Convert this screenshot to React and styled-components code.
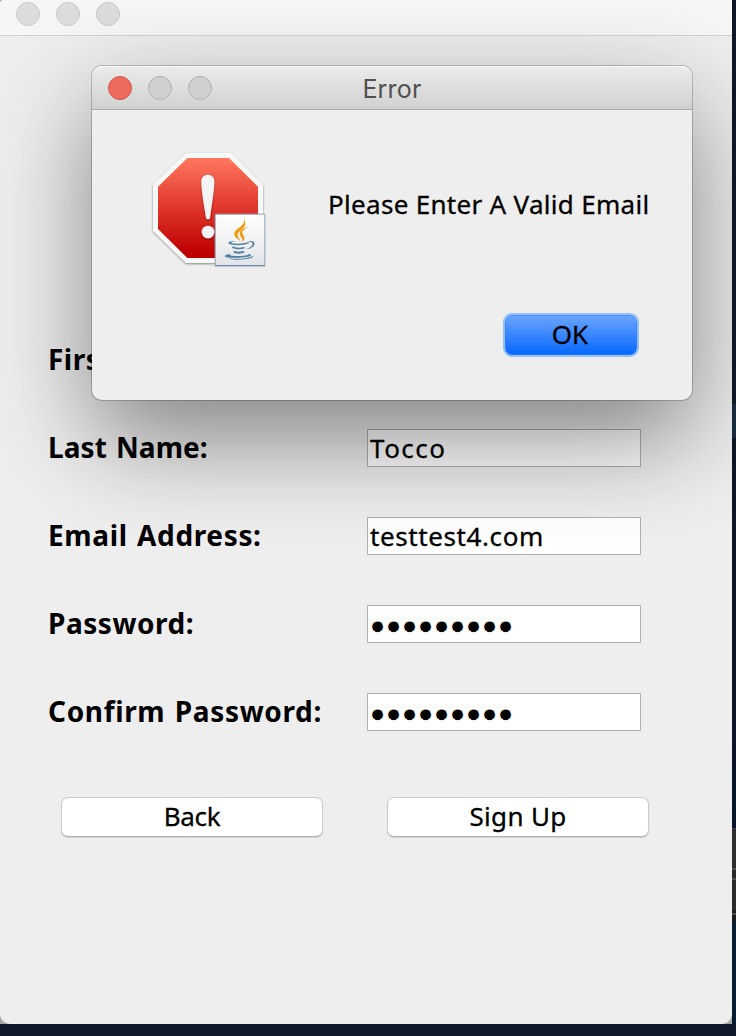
import React from "react";
import styled, { createGlobalStyle } from "styled-components";

const GlobalStyle = createGlobalStyle`
  *, *::before, *::after { box-sizing: border-box; }
  body {
    margin: 0;
    background: #0f1b2a;
    font-family: "Noto Sans", "Open Sans", sans-serif;
    color: #000;
  }
`;

const Desktop = styled.main`
  display: grid;
  grid-template: 1024px 12px / 732px 4px;
  width: 736px;
  height: 1036px;
  overflow: hidden;
`;

const DesktopEdge = styled.div`
  background: linear-gradient(
    to bottom,
    #0f1725 0 404px,
    #1a2a3e 404px 438px,
    #0e1625 438px 700px,
    #08152a 828px,
    #4a4a4c 828px 829px,
    #2e2e30 829px 868px,
    #505052 868px 870px,
    #29292b 870px 878px,
    #505052 878px 880px,
    #2b2b2d 880px 911px,
    #1c1c1e 911px 913px,
    #505052 913px 915px,
    #1d1d1f 915px 921px,
    #0a1a30 922px
  );
`;

const WindowCorner = styled.div`
  background: #a6a6a6;
`;

const Window = styled.section`
  position: relative;
  height: 1024px;
  border-radius: 4px 0 10px 10px;
  background: #eee;
  overflow: hidden;
`;

const WindowBar = styled.header`
  display: flex;
  height: 36px;
  padding: 2px 16px 0;
  background: #f6f6f6;
  border-bottom: 1px solid #d1d1d1;
`;

const Lights = styled.div`
  display: flex;
  gap: 16px;
`;

const Light = styled.span`
  width: 24px;
  height: 24px;
  border-radius: 50%;
  border: 1px solid ${(p) => p.$edge};
  background: ${(p) => p.$fill};
`;

const Form = styled.div`
  display: flex;
  flex-direction: column;
  gap: 50px;
  padding: 305px 91px 0 48px;
`;

const FieldRow = styled.div`
  display: flex;
  align-items: center;
  justify-content: space-between;
  height: 38px;
`;

const Label = styled.label`
  padding-bottom: 1px;
  font-size: 28px;
  line-height: 37px;
  font-weight: 700;
  white-space: nowrap;
  letter-spacing: ${(p) => p.$track}px;
  word-spacing: 1.5px;
`;

const Field = styled.div`
  display: flex;
  align-items: center;
  width: 274px;
  height: 38px;
  padding: 0 2px;
  border: 1px solid #b0b0b0;
  background: #fff;
  font-size: ${(p) => (p.$secret ? 25 : 26)}px;
  line-height: 36px;
  letter-spacing: ${(p) => p.$track}px;
  white-space: nowrap;
  -webkit-text-stroke: ${(p) => (p.$secret ? 0 : 0.3)}px #000;
`;

const Actions = styled.div`
  display: flex;
  gap: 64px;
  padding: 16px 0 0 13px;
`;

const Button = styled.button`
  width: 262px;
  height: 40px;
  flex: none;
  padding: 0 0 2px;
  border: 1px solid #cbcbcb;
  border-bottom-color: #b0b0b0;
  border-radius: 7px;
  background: #fff;
  box-shadow: 0 1px 1px rgba(0, 0, 0, 0.12);
  color: #000;
  font: 400 26px/36px "Noto Sans", sans-serif;
  letter-spacing: ${(p) => p.$track || 0}px;
  -webkit-text-stroke: 0.3px #000;
`;

const Dialog = styled.section`
  position: absolute;
  left: 92px;
  top: 66px;
  width: 600px;
  height: 334px;
  border-radius: 10px;
  background: #eee;
  box-shadow: 0 0 0 1px rgba(0, 0, 0, 0.2), 0 39px 100px rgba(0, 0, 0, 0.45);
`;

const DialogBar = styled.header`
  display: grid;
  grid-template-columns: 1fr auto 1fr;
  height: 44px;
  padding: 10px 16px 0;
  border-radius: 10px 10px 0 0;
  border-bottom: 1px solid #adadad;
  background: linear-gradient(#ebebeb, #d1d1d1);
  box-shadow: inset 0 1px 0 #f7f7f7;
`;

const DialogTitle = styled.h1`
  margin: 0;
  color: #505050;
  font: 400 25px/26px Inter, sans-serif;
  letter-spacing: 0.2px;
`;

const DialogBody = styled.div`
  display: flex;
  align-items: center;
  gap: 60px;
  height: 166px;
  padding: 38px 0 8px 56px;
`;

const Message = styled.p`
  margin: 0;
  padding-bottom: 8px;
  font-size: 26px;
  line-height: 36px;
  letter-spacing: 0.3px;
  white-space: nowrap;
  -webkit-text-stroke: 0.3px #000;
`;

const DialogActions = styled.footer`
  display: flex;
  justify-content: flex-end;
  padding: 37px 53px 0 0;
`;

const DefaultButton = styled(Button)`
  width: 136px;
  height: 44px;
  padding: 0 2px 2px 0;
  border: 2px solid #92c0f3;
  border-radius: 9px;
  background: linear-gradient(#6ca5fb, #0567ff) padding-box;
  box-shadow: inset 0 0 0 1px rgba(40, 130, 255, 0.55);
`;

function TrafficLights({ active, fill, edge }) {
  return (
    <Lights>
      <Light $fill={active ? "#ed6a5e" : fill} $edge={active ? "#d5544a" : edge} />
      <Light $fill={fill} $edge={edge} />
      <Light $fill={fill} $edge={edge} />
    </Lights>
  );
}

function ErrorIcon() {
  return (
    <svg width="120" height="120" viewBox="24 24 360 360" aria-hidden="true">
      <defs>
        <linearGradient id="stop" x1="0" y1="0" x2="0" y2="1">
          <stop offset="0" stopColor="#ff775e" />
          <stop offset="0.5" stopColor="#df362c" />
          <stop offset="0.95" stopColor="#bd0000" />
        </linearGradient>
        <linearGradient id="tile" x1="0" y1="0" x2="0" y2="1">
          <stop offset="0" stopColor="#fff" />
          <stop offset="1" stopColor="#e3e4e8" />
        </linearGradient>
        <filter id="drop" x="-10%" y="-10%" width="120%" height="120%">
          <feDropShadow dx="0" dy="3" stdDeviation="3" floodOpacity="0.45" />
        </filter>
      </defs>
      <path d="M138 39H273L369 135V272L273 369H138L39 272V135Z" fill="#f8f8f8" filter="url(#drop)" />
      <path d="M142 54H267L354 140V267L267 354H142L54 267V140Z" fill="url(#stop)" />
      <g fill="#f4f4f4" filter="url(#drop)">
        <path d="M184 124C184 98 223 98 223 124C223 154 214 200 210 233Q209 238 204 238Q199 238 198 233C193 200 184 154 184 124Z" />
        <circle cx="204" cy="276" r="19" />
      </g>
      <rect x="225.5" y="222.5" width="149" height="154" rx="2" fill="url(#tile)" stroke="#8ba0b7" strokeWidth="3" />
      <path d="M224 377.5H376" stroke="#607f9f" strokeWidth="3" />
      <g fill="#ef9b0f">
        <path d="M312 237C321 255 313 263 301 272C289 281 291 288 303 304C285 293 276 282 289 270C302 258 315 254 312 237Z" />
        <path d="M327 261C309 268 304 275 309 284C315 293 315 298 307 306C309 297 305 294 301 287C294 275 307 264 327 261Z" />
      </g>
      <g fill="#52809f">
        <path d="M287 303C275 306 270 308 277 310C290 313 311 311 324 307L328 310C308 317 280 317 268 312C260 307 272 303 287 303Z" />
        <path d="M322 305C338 300 346 306 343 314C340 322 330 326 320 327C333 322 340 315 337 309C335 305 329 305 322 305Z" />
        <path d="M279 319C273 324 278 327 292 328C303 328 311 326 316 324L311 321C300 324 286 324 279 319Z" />
        <path d="M283 332C277 337 283 340 294 341C304 341 310 339 315 336L309 333C299 336 290 336 283 332Z" />
        <path d="M272 341C258 343 250 348 257 351C275 356 320 353 331 348C335 345 331 342 327 341C328 346 310 348 292 348C276 348 263 347 272 341Z" />
        <path d="M341 346C342 356 316 360 288 359C276 359 269 357 266 355C298 359 333 355 341 346Z" />
      </g>
    </svg>
  );
}

const fields = [
  { label: "First Name:", track: 0.5, value: "" },
  { label: "Last Name:", track: 0.1, value: "Tocco", valueTrack: 1.5 },
  { label: "Email Address:", track: 0.64, value: "testtest4.com", valueTrack: 0.6 },
  { label: "Password:", track: 0.55, value: "●●●●●●●●●", valueTrack: 0.9, secret: true },
  { label: "Confirm Password:", track: 0.66, value: "●●●●●●●●●", valueTrack: 0.9, secret: true },
];

export default function App() {
  return (
    <>
      <GlobalStyle />
      <Desktop>
        <WindowCorner>
          <Window>
            <WindowBar>
              <TrafficLights fill="#dcdcdc" edge="#c9c9c9" />
            </WindowBar>
            <Form>
              {fields.map((f) => (
                <FieldRow key={f.label}>
                  <Label $track={f.track}>{f.label}</Label>
                  <Field $secret={f.secret} $track={f.valueTrack || 0}>
                    {f.value}
                  </Field>
                </FieldRow>
              ))}
              <Actions>
                <Button type="button" $track={-0.3}>Back</Button>
                <Button type="button" $track={0.35}>Sign Up</Button>
              </Actions>
            </Form>
            <Dialog role="alertdialog">
              <DialogBar>
                <TrafficLights active fill="#cfcfcf" edge="#b0b0b0" />
                <DialogTitle>Error</DialogTitle>
              </DialogBar>
              <DialogBody>
                <ErrorIcon />
                <Message>Please Enter A Valid Email</Message>
              </DialogBody>
              <DialogActions>
                <DefaultButton type="button">OK</DefaultButton>
              </DialogActions>
            </Dialog>
          </Window>
        </WindowCorner>
        <DesktopEdge />
      </Desktop>
    </>
  );
}
